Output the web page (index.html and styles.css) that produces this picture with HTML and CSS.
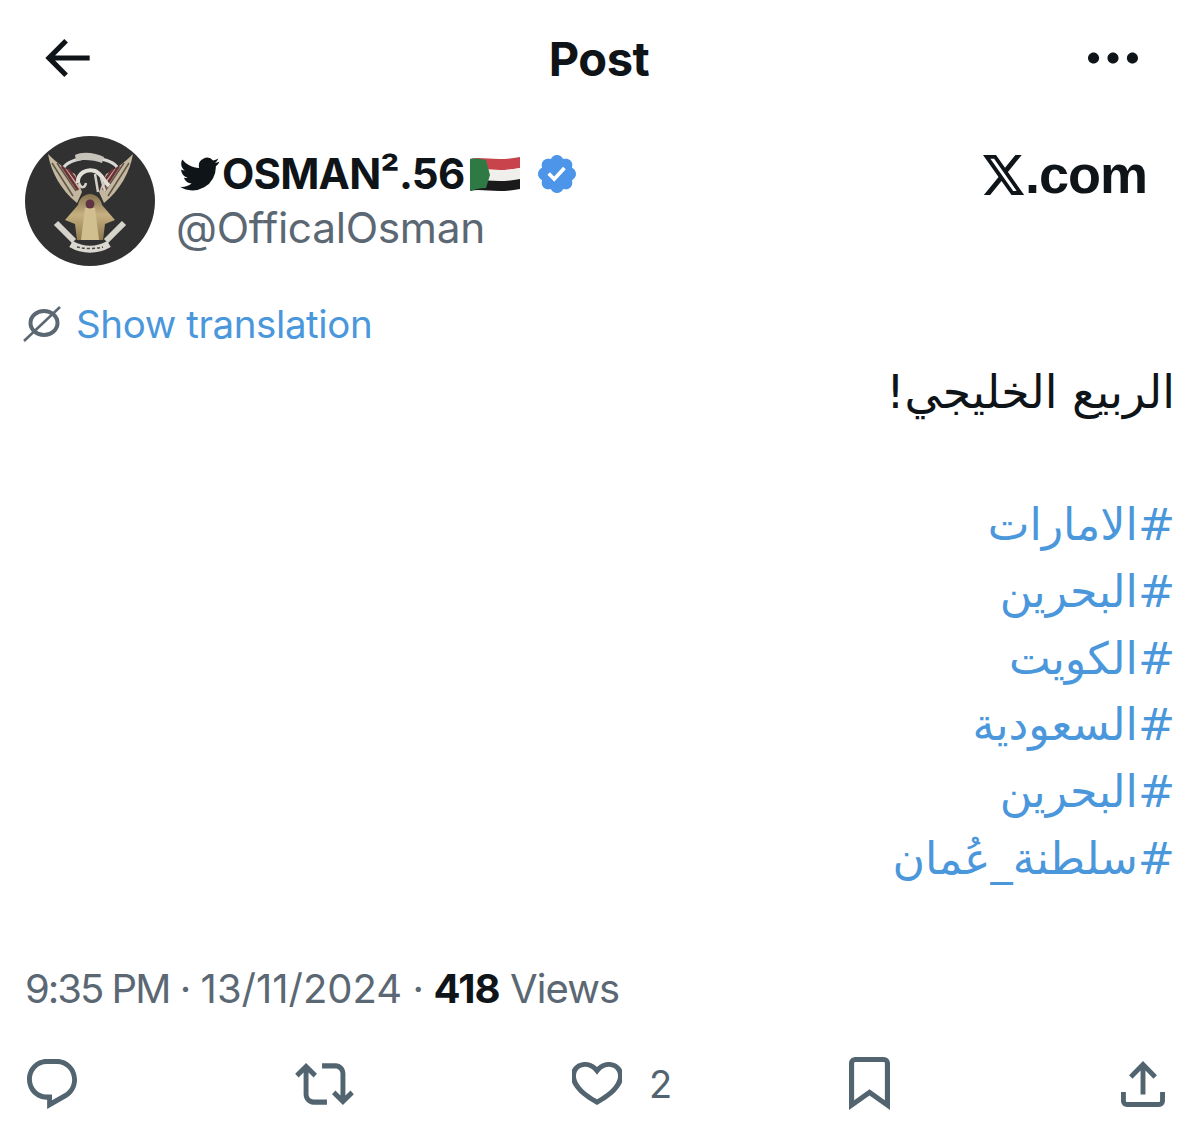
FILE: index.html
```html
<!DOCTYPE html>
<html lang="en">
<head>
<meta charset="utf-8">
<title>Post</title>
<link rel="stylesheet" href="styles.css">
</head>
<body>
<main class="page">
  <header class="topbar">
    <svg class="back" viewBox="3.590 4.540 17.410 14.920"><path d="M7.414 13l5.043 5.040-1.414 1.420L3.586 12l7.457-7.460 1.414 1.420L7.414 11H21v2H7.414z"/></svg>
    <h1 class="title">Post</h1>
    <svg class="more" viewBox="3 10 18 4"><path d="M3 12c0-1.100.9-2 2-2s2 .9 2 2-.9 2-2 2-2-.9-2-2zm9 2c1.100 0 2-.9 2-2s-.9-2-2-2-2 .9-2 2 .9 2 2 2zm7 0c1.100 0 2-.9 2-2s-.9-2-2-2-2 .9-2 2 .9 2 2 2z"/></svg>
  </header>

  <section class="author">
    <svg class="avatar" viewBox="0 0 130 130">
      <defs>
        <linearGradient id="gold" x1="0" y1="0" x2="0" y2="1">
          <stop offset="0" stop-color="#857350"/>
          <stop offset="0.45" stop-color="#c6b080"/>
          <stop offset="1" stop-color="#8f7a4f"/>
        </linearGradient>
      </defs>
      <circle cx="65" cy="65" r="65" fill="#313132"/>
      <path d="M23 18C26 36 36 54 52 67L57 56 50 38C41 34 31 26 23 18Z" fill="#c4b79f"/>
      <path d="M108 18C105 36 95 54 79 67L74 56 81 38C90 34 100 26 108 18Z" fill="#c4b79f"/>
      <path d="M27 27 48 60M32 27 51 55" stroke="#5f5546" stroke-width="1.500" fill="none"/>
      <path d="M37 30 53 54M43 33 54 48" stroke="#6c2f38" stroke-width="2.500" fill="none"/>
      <path d="M104 27 83 60M99 27 80 55" stroke="#5f5546" stroke-width="1.500" fill="none"/>
      <path d="M94 30 78 54M88 33 77 48" stroke="#6c2f38" stroke-width="2.500" fill="none"/>
      <path d="M39 31C48 19 83 19 92 31" stroke="#d9d8d4" stroke-width="3" fill="none"/>
      <path d="M50 19C58 15 71 17 79 21L77 27C70 24 58 23 51 25Z" fill="#c6c3bb"/>
      <path d="M53 47C52 38 61 32 70 35 76 37 79 45 84 50" stroke="#e2dfd8" stroke-width="4" fill="none"/>
      <path d="M70 38 73 56M76 42 80 55M54 47C56 53 60 52 61 47" stroke="#d3d0c8" stroke-width="2.500" fill="none"/>
      <path d="M65 58C71 58 76 63 77 69L90 84 80 88 78 104H52L50 88 40 84 53 69C54 63 59 58 65 58Z" fill="url(#gold)"/>
      <path d="M60 72h10l4 32H56z" fill="#d2bf90"/>
      <circle cx="65" cy="68" r="4.500" fill="#5f3342"/>
      <path d="M31 87 49 105M99 87 81 105" stroke="#d6d3cb" stroke-width="6" fill="none"/>
      <path d="M46 108C58 115 72 115 84 108" stroke="#dad8d0" stroke-width="7" fill="none"/>
      <path d="M52 111C60 113 70 113 78 111" stroke="#4b4b4b" stroke-width="1.500" stroke-dasharray="3 2" fill="none"/>
    </svg>
    <div class="identity">
      <div class="name-line">
        <svg class="bird" viewBox="0 2 24 20"><path d="M23.600 4.600c-.9.4-1.800.7-2.800.8 1-.6 1.800-1.600 2.200-2.700-1 .6-2 1-3.100 1.200a4.900 4.900 0 0 0-8.400 4.500C7.400 8.200 3.800 6.300 1.400 3.300c-1.300 2.200-.7 5.100 1.500 6.600-.8 0-1.600-.2-2.200-.6 0 2.300 1.600 4.400 3.900 4.900-.7.2-1.500.2-2.200.1.600 2 2.400 3.400 4.600 3.400A9.900 9.900 0 0 1 0 19.700a14 14 0 0 0 21.500-12.400c1-.7 1.800-1.600 2.100-2.700z"/></svg>
        <span class="name">OSMAN².56</span>
        <svg class="flag" viewBox="0 0 50 36">
          <path d="M0 3C12 0 26 6 50 1V12C26 17 12 11 0 14Z" fill="#c8434c"/>
          <path d="M0 14C12 11 26 17 50 12V23C26 28 12 22 0 25Z" fill="#f1efec"/>
          <path d="M0 25C12 22 26 28 50 23V33C26 38 12 32 0 35Z" fill="#1a1a1a"/>
          <path d="M0 3C6 2 10 3 16 4L20 19 16 32C10 32 6 33 0 35Z" fill="#2f7a44"/>
        </svg>
        <svg class="verified" viewBox="1.750 1.750 20.500 20.500"><path d="M22.250 12c0-1.430-.88-2.670-2.190-3.340.46-1.390.2-2.900-.81-3.910s-2.520-1.270-3.910-.81c-.66-1.310-1.910-2.190-3.340-2.190s-2.670.88-3.330 2.190c-1.400-.46-2.910-.2-3.920.81s-1.260 2.520-.8 3.910C2.630 9.330 1.750 10.570 1.750 12s.88 2.670 2.200 3.340c-.46 1.390-.21 2.900.8 3.910s2.520 1.260 3.910.81c.67 1.310 1.910 2.190 3.340 2.190s2.680-.88 3.340-2.190c1.390.45 2.900.2 3.910-.81s1.270-2.520.81-3.910c1.310-.67 2.190-1.910 2.190-3.340zm-11.710 4.200L6.800 12.460l1.410-1.420 2.260 2.260 4.800-5.230 1.470 1.360-6.200 6.770z"/></svg>
      </div>
      <div class="handle">@OfficalOsman</div>
    </div>
    <div class="brand">
      <svg class="x-logo" viewBox="1.250 2.250 21.500 19.500" preserveAspectRatio="none"><path d="M18.244 2.250h3.308l-7.227 8.260 8.502 11.240H16.170l-5.214-6.817L4.990 21.750H1.680l7.730-8.835L1.254 2.250H8.080l4.713 6.231zm-1.161 17.520h1.833L7.084 4.126H5.117z"/></svg>
      <span>.com</span>
    </div>
  </section>

  <div class="translate">
    <svg class="globe" viewBox="0 0 38 36"><ellipse cx="21" cy="17" rx="13.500" ry="12"/><path class="slash" d="M37 1 1 35"/></svg>
    <a class="translate-link">Show translation</a>
  </div>

  <article class="tweet" dir="rtl">
    <p class="lead">الربيع الخليجي!</p>
    <ul class="tags">
      <li>#الامارات</li>
      <li>#البحرين</li>
      <li>#الكويت</li>
      <li>#السعودية</li>
      <li>#البحرين</li>
      <li>#سلطنة_عُمان</li>
    </ul>
  </article>

  <p class="meta"><span class="time">9:35 PM</span> · <span class="date">13/11/2024</span> · <strong>418</strong> Views</p>

  <nav class="actions">
    <svg class="action reply" viewBox="1.750 2 20.500 19.700" preserveAspectRatio="none"><path d="M1.751 10c0-4.420 3.584-8 8.005-8h4.366c4.490 0 8.129 3.640 8.129 8.130 0 2.960-1.607 5.680-4.196 7.110l-8.054 4.460v-3.690h-.067c-4.490.1-8.183-3.510-8.183-8.010zm8.005-6c-3.317 0-6.005 2.690-6.005 6 0 3.370 2.770 6.080 6.138 6.010l.351-.01h1.761v2.300l5.087-2.810c1.951-1.080 3.163-3.130 3.163-5.360 0-3.390-2.744-6.130-6.129-6.130H9.756z"/></svg>
    <svg class="action retweet" viewBox="0 3.880 24 16.240" preserveAspectRatio="none"><path d="M4.500 3.880l4.432 4.140-1.364 1.460L5.500 7.550V16c0 1.100.896 2 2 2H13v2H7.500c-2.209 0-4-1.790-4-4V7.550L1.432 9.480.068 8.020 4.500 3.880zM16.500 6H11V4h5.500c2.209 0 4 1.790 4 4v8.450l2.068-1.930 1.364 1.460-4.432 4.140-4.432-4.140 1.364-1.460 2.068 1.930V8c0-1.100-.896-2-2-2z"/></svg>
    <div class="likes">
      <svg class="action like" viewBox="2.500 3.500 19 17.700" preserveAspectRatio="none"><path d="M16.697 5.500c-1.222-.06-2.679.51-3.890 2.160l-.805 1.090-.806-1.090C9.984 6.010 8.526 5.440 7.304 5.500c-1.243.07-2.349.78-2.910 1.910-.552 1.120-.633 2.780.479 4.820 1.074 1.970 3.257 4.270 7.129 6.610 3.870-2.340 6.052-4.640 7.126-6.610 1.111-2.040 1.030-3.700.477-4.820-.561-1.130-1.666-1.840-2.908-1.910zm4.187 7.690c-1.351 2.480-4.001 5.120-8.379 7.670l-.503.3-.504-.3c-4.379-2.550-7.029-5.190-8.382-7.670-1.360-2.500-1.410-4.860-.514-6.670.887-1.790 2.647-2.910 4.601-3.010 1.651-.09 3.368.56 4.798 2.010 1.429-1.450 3.146-2.100 4.796-2.010 1.954.1 3.714 1.220 4.601 3.010.896 1.810.846 4.170-.514 6.670z"/></svg>
      <span class="like-count">2</span>
    </div>
    <svg class="action bookmark" viewBox="4 2 16 20.940" preserveAspectRatio="none"><path d="M4 4.500C4 3.120 5.119 2 6.500 2h11C18.881 2 20 3.120 20 4.500v18.440l-8-5.710-8 5.710V4.500zM6.500 4c-.276 0-.5.22-.5.5v14.560l6-4.290 6 4.290V4.500c0-.28-.224-.5-.5-.5h-11z"/></svg>
    <svg class="action share" viewBox="3 2.590 18 18.410" preserveAspectRatio="none"><path d="M12 2.590l5.700 5.700-1.410 1.420L13 6.410V16h-2V6.410l-3.300 3.300-1.410-1.420L12 2.590zM21 15l-.02 3.510c0 1.380-1.120 2.490-2.500 2.490H5.500C4.110 21 3 19.880 3 18.500V15h2v3.500c0 .28.22.5.5.5h12.980c.28 0 .5-.22.5-.5L19 15h2z"/></svg>
  </nav>
</main>
</body>
</html>
```
FILE: styles.css
```css
* { box-sizing: border-box; }
html, body { margin: 0; padding: 0; background: #fff; }
body { font-family: "Inter", "Liberation Sans", sans-serif; color: #0f1419; }
.page { width: 1200px; height: 1147px; padding: 0 27px 0 25px; display: flex; flex-direction: column; }
.topbar { height: 116px; display: grid; grid-template-columns: 1fr auto 1fr; align-items: center; padding: 0 19px 0 19px; }
.back { width: 47px; height: 38px; fill: #0f1419; }
.title { margin: 0; font-size: 47px; font-weight: 700; letter-spacing: -0.500px; }
.more { width: 50px; height: 12px; margin-right: 16px; fill: #0f1419; justify-self: end; }
.author { display: flex; align-items: center; margin-top: 20px; height: 130px; }
.avatar { width: 130px; height: 130px; flex: none; }
.identity { margin-left: 22px; display: flex; flex-direction: column; gap: 4px; flex: 1; }
.name-line { display: flex; align-items: center; }
.bird { width: 40px; height: 34px; margin-left: 3px; fill: #0f1419; }
.name { margin-left: 2px; font-size: 42px; font-weight: 700; letter-spacing: -0.800px; line-height: 50px; }
.flag { width: 50px; height: 36px; margin-left: 6px; }
.verified { width: 38px; height: 38px; margin-left: 18px; fill: #4c95e8; }
.handle { margin-left: -1px; font-size: 42.400px; line-height: 50px; color: #5b6874; font-weight: 400; letter-spacing: -0.300px; }
.brand { display: flex; align-items: flex-end; gap: 1px; margin-right: 26px; margin-bottom: 54px; font-size: 54px; line-height: 42px; font-weight: 700; letter-spacing: -1px; font-family: "Liberation Sans", sans-serif; }
.x-logo { width: 41px; height: 40px; fill: #0f1419; flex: none; }
.translate { display: flex; align-items: center; gap: 15px; margin-top: 33px; height: 50px; }
.globe { width: 38px; height: 36px; margin-left: -2px; fill: none; stroke: #5b6874; stroke-width: 4; }
.slash { stroke-width: 2.500; }
.translate-link { color: #4b97dc; font-size: 38.500px; letter-spacing: -0.400px; }
.tweet { margin-top: 10px; margin-right: -2px; font-family: "DejaVu Sans", sans-serif; font-size: 44.300px; }
.lead { margin: 0; font-size: 45.800px; line-height: 66px; }
.tags { list-style: none; margin: 67px 0 0; padding: 0; color: #4b97dc; }
.tags li { line-height: 66.800px; }
.meta { margin: 71px 0 0; font-size: 40px; line-height: 50px; color: #5b6874; letter-spacing: -0.900px; }
.time { letter-spacing: -2px; }
.date { letter-spacing: 0; }
.meta strong { color: #0f1419; font-weight: 700; }
.actions { margin-top: 43px; display: grid; grid-template-columns: 268px 277px 277px 272px auto; align-items: center; padding-left: 2px; height: 54px; }
.action { fill: #536471; flex: none; }
.reply { width: 50px; height: 50px; }
.retweet { width: 59px; height: 42px; }
.like { width: 50px; height: 43px; }
.bookmark { width: 41px; height: 53px; }
.share { width: 44px; height: 46px; }
.likes { display: flex; align-items: center; gap: 27px; }
.like-count { font-size: 38px; color: #536471; }
```
